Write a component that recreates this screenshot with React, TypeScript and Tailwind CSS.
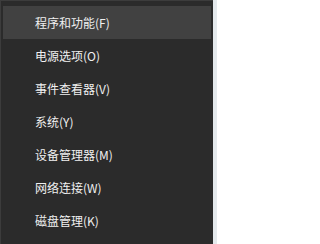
import React from "react";

const items = [
  "程序和功能(F)",
  "电源选项(O)",
  "事件查看器(V)",
  "系统(Y)",
  "设备管理器(M)",
  "网络连接(W)",
  "磁盘管理(K)",
];

export default function App() {
  return (
    <div className="flex h-[244px] w-[217px] bg-[#e4e9ec]">
      <div className="h-full w-[213px] border-t border-l border-[#3c3c3c] bg-[#2b2b2b] pt-[5px]">
        {items.map((label, i) => (
          <div
            key={label}
            className={`mx-[2px] flex h-[33px] items-center pl-[32px] text-[12px] text-[#f0f0f0] ${
              i === 0 ? "bg-[#414141]" : ""
            }`}
            style={{ fontFamily: '"Noto Sans CJK SC", "Noto Sans", sans-serif' }}
          >
            {label}
          </div>
        ))}
      </div>
    </div>
  );
}
